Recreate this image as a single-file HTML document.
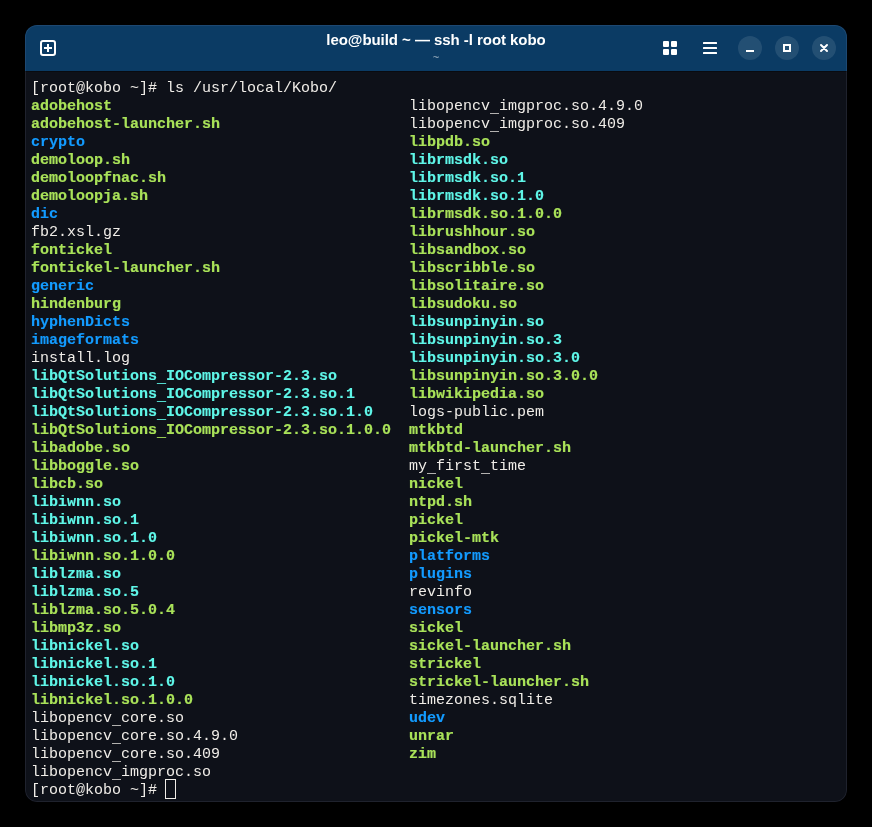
<!DOCTYPE html>
<html><head><meta charset="utf-8">
<style>
html,body{margin:0;padding:0;background:#000;width:872px;height:827px;overflow:hidden;}
.win{position:absolute;left:25px;top:25px;width:822px;height:777px;border-radius:12px;overflow:hidden;background:#0e1119;}
.win::after{content:"";position:absolute;inset:0;border-radius:12px;box-shadow:inset 0 0 0 1px rgba(210,210,255,0.09);pointer-events:none;}
.hdr{position:absolute;left:0;top:0;width:822px;height:46px;background:#0b3b64;box-shadow:0 1px 0 rgba(0,0,0,0.35);}
.title{position:absolute;left:0;top:31px;will-change:transform;width:872px;text-align:center;font-family:"Liberation Sans",sans-serif;font-weight:bold;font-size:15px;letter-spacing:-0.05px;line-height:18px;color:#fff;white-space:pre;}
.sub{position:absolute;left:0;top:51px;will-change:transform;width:872px;text-align:center;font-family:"Liberation Sans",sans-serif;font-size:11px;line-height:12px;color:rgba(255,255,255,0.6);}
.ico{position:absolute;}
.btn{position:absolute;width:24px;height:24px;border-radius:50%;background:rgba(255,255,255,0.1);top:36px;}
.term{position:absolute;top:80px;will-change:transform;font-family:"Liberation Mono",monospace;font-size:15px;line-height:18px;}
.term div{height:18px;white-space:pre;}
.w{color:#f0ede8;}
.g{color:#a9e259;font-weight:bold;-webkit-text-stroke:0.15px #a9e259;}
.b{color:#139bff;font-weight:bold;-webkit-text-stroke:0.15px #139bff;}
.c{color:#5ff6e8;font-weight:bold;-webkit-text-stroke:0.15px #5ff6e8;}
.u{position:relative;top:2px;}
.cur{position:absolute;left:165px;top:779px;width:9px;height:18px;border:1px solid #f0ede8;}
</style></head><body>
<div class="win"><div class="hdr"></div></div>
<svg class="ico" style="left:40px;top:40px" width="16" height="16" viewBox="0 0 16 16"><rect x="1" y="1" width="14" height="14" rx="2" fill="none" stroke="#fff" stroke-width="2"/><rect x="4" y="7" width="8" height="2" fill="#fff"/><rect x="7" y="4" width="2" height="8" fill="#fff"/></svg>
<div class="title">leo@build ~ — ssh -l root kobo</div>
<div class="sub">~</div>
<svg class="ico" style="left:663px;top:41px" width="14" height="14" viewBox="0 0 14 14"><rect x="0" y="0" width="6" height="6" rx="1" fill="#fff"/><rect x="8" y="0" width="6" height="6" rx="1" fill="#fff"/><rect x="0" y="8" width="6" height="6" rx="1" fill="#fff"/><rect x="8" y="8" width="6" height="6" rx="1" fill="#fff"/></svg>
<svg class="ico" style="left:703px;top:42px" width="14" height="12" viewBox="0 0 14 12"><rect x="0" y="0" width="14" height="2" rx="0.5" fill="#fff"/><rect x="0" y="5" width="14" height="2" rx="0.5" fill="#fff"/><rect x="0" y="10" width="14" height="2" rx="0.5" fill="#fff"/></svg>
<div class="btn" style="left:738px"></div>
<div class="btn" style="left:775px"></div>
<div class="btn" style="left:812px"></div>
<svg class="ico" style="left:746px;top:50px" width="8" height="2" viewBox="0 0 8 2"><rect x="0" y="0" width="8" height="2" fill="#fff"/></svg>
<svg class="ico" style="left:783px;top:44px" width="8" height="8" viewBox="0 0 8 8"><rect x="1" y="1" width="6" height="6" fill="none" stroke="#fff" stroke-width="2"/></svg>
<svg class="ico" style="left:819px;top:43px" width="10" height="10" viewBox="0 0 10 10"><path d="M2 2 L8 8 M8 2 L2 8" stroke="#fff" stroke-width="2" stroke-linecap="round"/></svg>
<div class="term" style="left:31px">
<div class="w">[root@kobo ~]# ls /usr/local/Kobo/</div>
<div class="g">adobehost</div>
<div class="g">adobehost-launcher.sh</div>
<div class="b">crypto</div>
<div class="g">demoloop.sh</div>
<div class="g">demoloopfnac.sh</div>
<div class="g">demoloopja.sh</div>
<div class="b">dic</div>
<div class="w">fb2.xsl.gz</div>
<div class="g">fontickel</div>
<div class="g">fontickel-launcher.sh</div>
<div class="b">generic</div>
<div class="g">hindenburg</div>
<div class="b">hyphenDicts</div>
<div class="b">imageformats</div>
<div class="w">install.log</div>
<div class="c">libQtSolutions<span class="u">_</span>IOCompressor-2.3.so</div>
<div class="c">libQtSolutions<span class="u">_</span>IOCompressor-2.3.so.1</div>
<div class="c">libQtSolutions<span class="u">_</span>IOCompressor-2.3.so.1.0</div>
<div class="g">libQtSolutions<span class="u">_</span>IOCompressor-2.3.so.1.0.0</div>
<div class="g">libadobe.so</div>
<div class="g">libboggle.so</div>
<div class="g">libcb.so</div>
<div class="c">libiwnn.so</div>
<div class="c">libiwnn.so.1</div>
<div class="c">libiwnn.so.1.0</div>
<div class="g">libiwnn.so.1.0.0</div>
<div class="c">liblzma.so</div>
<div class="c">liblzma.so.5</div>
<div class="g">liblzma.so.5.0.4</div>
<div class="g">libmp3z.so</div>
<div class="c">libnickel.so</div>
<div class="c">libnickel.so.1</div>
<div class="c">libnickel.so.1.0</div>
<div class="g">libnickel.so.1.0.0</div>
<div class="w">libopencv<span class="u">_</span>core.so</div>
<div class="w">libopencv<span class="u">_</span>core.so.4.9.0</div>
<div class="w">libopencv<span class="u">_</span>core.so.409</div>
<div class="w">libopencv<span class="u">_</span>imgproc.so</div>
<div class="w">[root@kobo ~]# </div>
</div>
<div class="term" style="left:409px;top:98px">
<div class="w">libopencv<span class="u">_</span>imgproc.so.4.9.0</div>
<div class="w">libopencv<span class="u">_</span>imgproc.so.409</div>
<div class="g">libpdb.so</div>
<div class="c">librmsdk.so</div>
<div class="c">librmsdk.so.1</div>
<div class="c">librmsdk.so.1.0</div>
<div class="g">librmsdk.so.1.0.0</div>
<div class="g">librushhour.so</div>
<div class="g">libsandbox.so</div>
<div class="g">libscribble.so</div>
<div class="g">libsolitaire.so</div>
<div class="g">libsudoku.so</div>
<div class="c">libsunpinyin.so</div>
<div class="c">libsunpinyin.so.3</div>
<div class="c">libsunpinyin.so.3.0</div>
<div class="g">libsunpinyin.so.3.0.0</div>
<div class="g">libwikipedia.so</div>
<div class="w">logs-public.pem</div>
<div class="g">mtkbtd</div>
<div class="g">mtkbtd-launcher.sh</div>
<div class="w">my<span class="u">_</span>first<span class="u">_</span>time</div>
<div class="g">nickel</div>
<div class="g">ntpd.sh</div>
<div class="g">pickel</div>
<div class="g">pickel-mtk</div>
<div class="b">platforms</div>
<div class="b">plugins</div>
<div class="w">revinfo</div>
<div class="b">sensors</div>
<div class="g">sickel</div>
<div class="g">sickel-launcher.sh</div>
<div class="g">strickel</div>
<div class="g">strickel-launcher.sh</div>
<div class="w">timezones.sqlite</div>
<div class="b">udev</div>
<div class="g">unrar</div>
<div class="g">zim</div>
</div>
<div class="cur"></div>
</body></html>
